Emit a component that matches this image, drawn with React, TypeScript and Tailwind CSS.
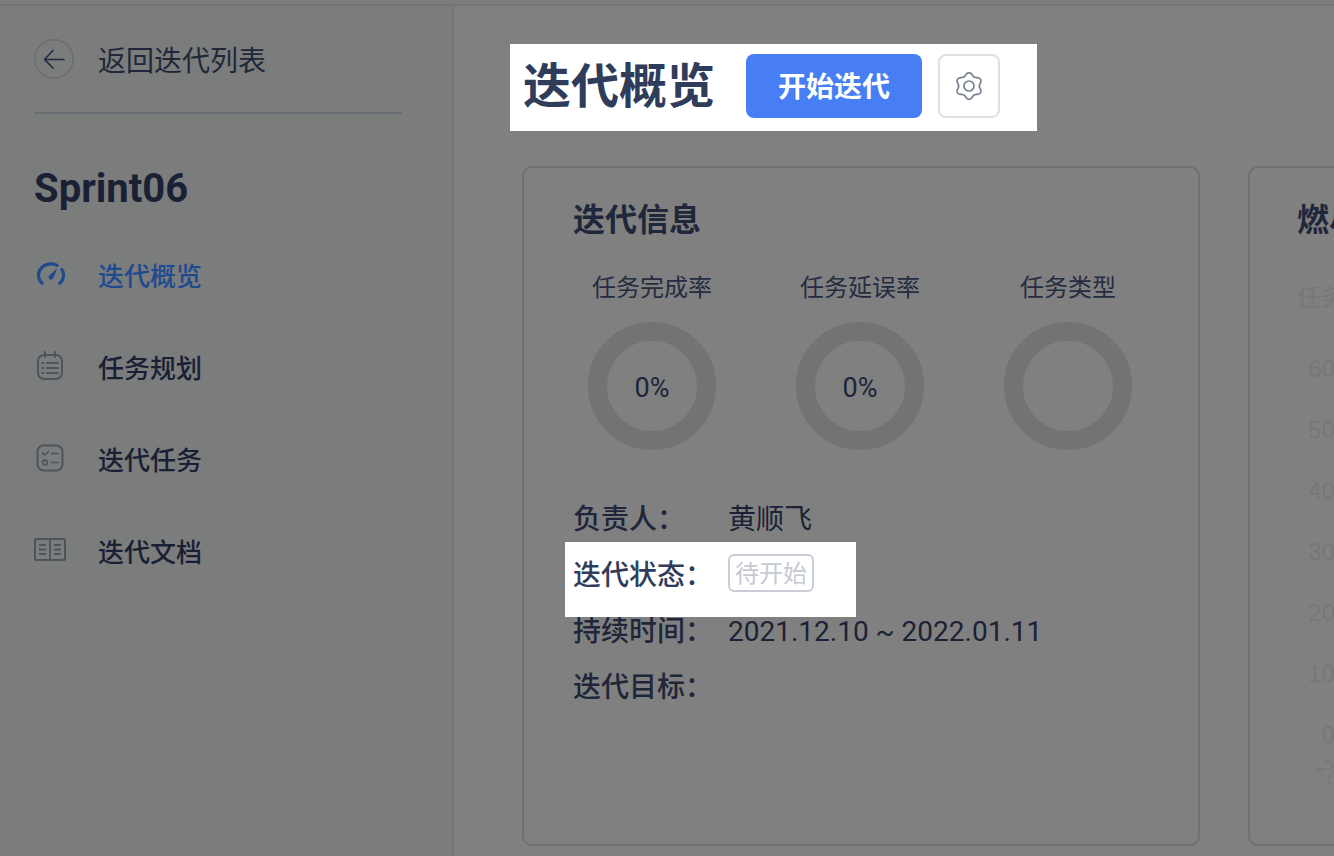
import React from "react";

const gearPath = (() => {
  const pts: string[] = [];
  for (let i = 0; i < 120; i++) {
    const t = (i / 120) * Math.PI * 2;
    const r = 11.8 + 1.5 * Math.cos(6 * t);
    const x = 14 + r * Math.sin(t);
    const y = 14 - r * Math.cos(t);
    pts.push(`${i === 0 ? "M" : "L"}${x.toFixed(2)} ${y.toFixed(2)}`);
  }
  return pts.join(" ") + " Z";
})();

function BackIcon() {
  return (
    <svg width="40" height="40" viewBox="0 0 40 40" fill="none" className="flex-none">
      <circle cx="20" cy="20" r="19.2" stroke="#6a6c74" strokeWidth="1.4" />
      <path d="M10.5 20.5H30M19 11.5L10.5 20.5L19 29" stroke="#232c40" strokeWidth="1.7" strokeLinecap="round" strokeLinejoin="round" />
    </svg>
  );
}
function GaugeIcon() {
  return (
    <svg width="28" height="25" viewBox="0 0 30 27" fill="none" className="ml-[2px]">
      <path d="M5.5 23C3 20.7 1.5 17.5 1.5 14C1.5 7.4 7.5 2 15 2C17.4 2 19.8 2.6 21.6 3.6" stroke="#1f4a8f" strokeWidth="3.4" strokeLinecap="round" />
      <path d="M26.6 8C27.9 9.8 28.5 11.9 28.5 14C28.5 17.5 27 20.7 24.5 23" stroke="#1f4a8f" strokeWidth="3.4" strokeLinecap="round" />
      <path d="M13 14.5L22 6.5L17.4 17.4C16.6 19.2 14.8 19.4 13.5 18.4C12.2 17.4 12 15.6 13 14.5Z" fill="#1f4a8f" />
    </svg>
  );
}
function PlanIcon() {
  return (
    <svg width="28" height="30" viewBox="0 0 28 30" fill="none" stroke="#50535d" strokeWidth="2" strokeLinecap="round" className="ml-[1px]">
      <rect x="2" y="4" width="24" height="24" rx="6" />
      <path d="M9 1V6M19 1V6" />
      <path d="M6.5 12H7.5M11 12H22M6.5 17H7.5M11 17H22M6.5 22H7.5M11 22H22" strokeWidth="1.8" />
    </svg>
  );
}
function TaskIcon() {
  return (
    <svg width="28" height="28" viewBox="0 0 28 28" fill="none" stroke="#50535d" strokeWidth="2" strokeLinecap="round" strokeLinejoin="round" className="ml-[1px]">
      <rect x="1.5" y="1.5" width="25" height="25" rx="6" />
      <path d="M6.5 9L9 11L12.5 7.5M15.5 9.5H22" strokeWidth="1.7" />
      <circle cx="9" cy="18.5" r="2.4" strokeWidth="1.7" />
      <path d="M15.5 18.5H22" strokeWidth="1.7" />
    </svg>
  );
}
function DocIcon() {
  return (
    <svg width="32" height="24" viewBox="0 0 32 24" fill="none" stroke="#50535d" strokeWidth="2" strokeLinejoin="round" className="-ml-[1px]">
      <rect x="1" y="1" width="30" height="21" rx="1" />
      <path d="M16 1V22M5 7H12M5 11.5H12M5 16H12M20 7H27M20 11.5H27M20 16H27" strokeWidth="1.8" />
    </svg>
  );
}

function NavItem({ icon, label, active }: { icon: React.ReactNode; label: string; active?: boolean }) {
  return (
    <div className="flex h-[92px] items-center">
      <div className="flex w-[64px] flex-none justify-start pl-px pb-[6px]">{icon}</div>
      <span className={`text-[26px] font-medium leading-none ${active ? "text-[#1f4a8f]" : "text-[#1a2034]"}`}>{label}</span>
    </div>
  );
}

function Ring({ title, value }: { title: string; value?: string }) {
  return (
    <div className="flex w-[208px] flex-none flex-col items-center">
      <div className="flex h-[32px] items-center text-[24px] leading-none text-[#252c40]">{title}</div>
      <div className="mt-[18px] flex h-[128px] w-[128px] items-center justify-center rounded-full border-[19px] border-[#737373]">
        {value && <span className="pt-[4px] text-[27px] leading-none text-[#1d2438]">{value}</span>}
      </div>
    </div>
  );
}

function Row({ label, children }: { label: string; children?: React.ReactNode }) {
  return (
    <div className="flex h-[56px] items-center">
      <span className="w-[155px] flex-none text-[28px] font-medium leading-none text-[#1f2639]">{label}</span>
      <span className="text-[28px] leading-none text-[#1b2236]">{children}</span>
    </div>
  );
}

export default function App() {
  return (
    <div className="flex h-[856px] w-[1334px] flex-col overflow-hidden bg-[#808080] font-['Roboto','Noto_Sans_CJK_SC',sans-serif]">
      <div className="h-[6px] flex-none border-b-2 border-[#747474] bg-[#7c7d7d]" />
      <div className="flex min-h-0 flex-1">
        <aside className="w-[454px] flex-none border-r-2 border-[#747576] bg-[#7b7c7c] px-[34px]">
          <div className="flex h-[108px] w-[368px] items-start border-b-2 border-[#6a6c74] pt-[33px]">
            <BackIcon />
            <span className="ml-[24px] flex h-[46px] items-center text-[28px] leading-none text-[#1f2839]">返回迭代列表</span>
          </div>
          <div className="mt-[52px] flex h-[46px] items-center text-[40px] font-bold leading-none text-[#1b2135]">Sprint06</div>
          <div className="mt-[19px]">
            <NavItem icon={<GaugeIcon />} label="迭代概览" active />
            <NavItem icon={<PlanIcon />} label="任务规划" />
            <NavItem icon={<TaskIcon />} label="迭代任务" />
            <NavItem icon={<DocIcon />} label="迭代文档" />
          </div>
        </aside>
        <main className="min-w-0 flex-1 pl-[56px] pt-[38px]">
          <div className="flex h-[87px] w-[527px] items-start bg-white pl-[13px] pt-[10px]">
            <h1 className="flex h-[66px] w-[223px] flex-none items-center text-[48px] font-bold leading-none text-[#2f3d5a]">迭代概览</h1>
            <button className="flex h-[64px] w-[176px] flex-none items-center justify-center rounded-[8px] bg-[#477ef3] pt-[4px] text-[28px] font-semibold leading-none text-white">开始迭代</button>
            <button className="ml-[16px] flex h-[64px] w-[62px] flex-none items-center justify-center rounded-[8px] border-2 border-[#dde1e6] bg-white">
              <svg width="28" height="28" viewBox="0 0 28 28" fill="none" stroke="#76818f" strokeWidth="1.7">
                <path d={gearPath} />
                <circle cx="14" cy="14" r="5" />
              </svg>
            </button>
          </div>
          <div className="ml-[12px] mt-[35px] flex gap-[48px]">
            <section className="h-[680px] w-[678px] flex-none rounded-[10px] border-2 border-[#6f6f76] pl-[49px] pt-[32px]">
              <h2 className="flex h-[40px] items-center text-[32px] font-semibold leading-none text-[#1f273b]">迭代信息</h2>
              <div className="mt-[32px] -ml-[25px] flex">
                <Ring title="任务完成率" value="0%" />
                <Ring title="任务延误率" value="0%" />
                <Ring title="任务类型" />
              </div>
              <div className="mt-[42px]">
                <Row label="负责人：">黄顺飞</Row>
                <div className="relative flex h-[56px] items-center">
                  <div className="absolute -left-[8px] -top-[6px] h-[75px] w-[291px] bg-white" />
                  <span className="relative w-[155px] flex-none text-[28px] font-medium leading-none text-[#2f3d5a]">迭代状态：</span>
                  <span className="relative mb-[6px] flex h-[38px] w-[86px] items-center justify-center rounded-[6px] border-2 border-[#c9ced6] pt-[2px] text-[24px] leading-none text-[#c5cad3]">待开始</span>
                </div>
                <Row label="持续时间：">2021.12.10 ~ 2022.01.11</Row>
                <Row label="迭代目标：" />
              </div>
            </section>
            <section className="relative h-[680px] w-[678px] flex-none rounded-[10px] border-2 border-[#6f6f76] pl-[48px] pt-[32px]">
              <h2 className="-ml-[1px] flex h-[40px] items-center text-[32px] font-semibold leading-none text-[#1f273b]">燃尽图</h2>
              <div className="mt-[46px] -ml-[1px] text-[24px] leading-none text-[#777777]">任务</div>
              <div className="mt-[28px] flex w-[37px] flex-col items-end font-['Liberation_Sans',sans-serif] text-[24px] leading-none text-[#777777]">
                <span className="flex h-[61px] items-center">60</span>
                <span className="flex h-[61px] items-center">50</span>
                <span className="flex h-[61px] items-center">40</span>
                <span className="flex h-[61px] items-center">30</span>
                <span className="flex h-[61px] items-center">20</span>
                <span className="flex h-[61px] items-center">10</span>
                <span className="flex h-[61px] items-center">0</span>
              </div>
              <span className="absolute left-[79px] top-[587px] origin-top-left rotate-45 whitespace-nowrap font-['Liberation_Sans',sans-serif] text-[24px] leading-none text-[#797979]">2021.12.10</span>
            </section>
          </div>
        </main>
      </div>
    </div>
  );
}
